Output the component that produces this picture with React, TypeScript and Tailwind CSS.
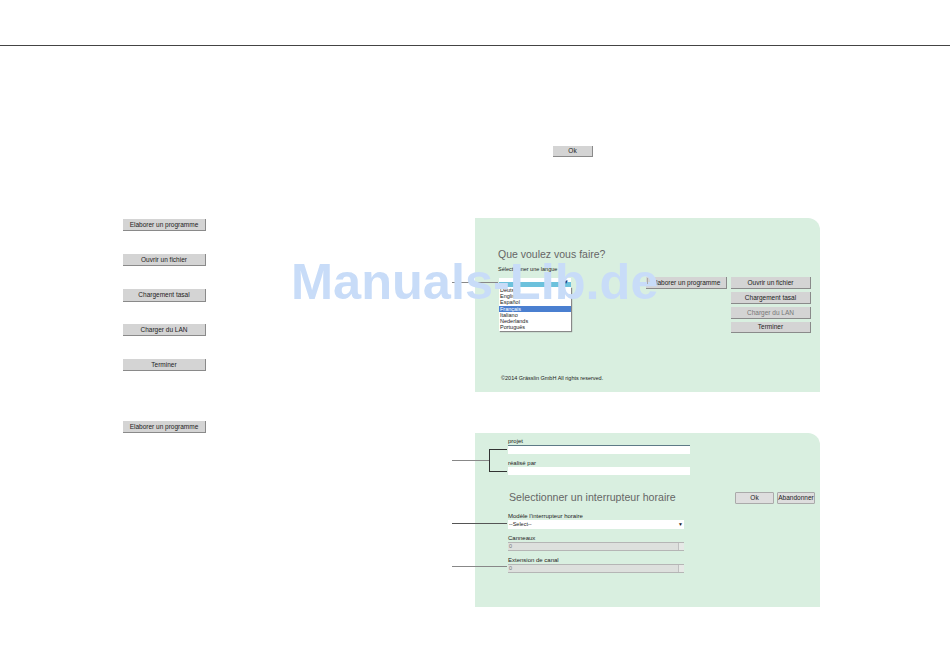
import React from 'react'

function GreyButton({ label, className = '' }: { label: string; className?: string }) {
  return (
    <div
      className={`flex items-center justify-center border-r border-b border-[#8a8a8a] bg-[#d4d4d4] pt-px text-[6.5px] leading-none text-[#222222] ${className}`}
    >
      {label}
    </div>
  )
}

function Spin({ value }: { value: string }) {
  return (
    <div className="flex h-[9px] w-[176px] items-center justify-between border-t border-b border-[#b5b5b5] bg-[#dde0dd] pl-px text-[5.5px] leading-none text-[#777777]">
      <span>{value}</span>
      <span className="h-full w-[6px] border-l border-[#c0c0c0] bg-[#e6e9e6]" />
    </div>
  )
}

const languages = ['Deutsch', 'English', 'Español', 'Français', 'Italiano', 'Nederlands', 'Português']

export default function App() {
  return (
    <div className="relative h-[670px] w-[950px] overflow-hidden bg-white font-['Liberation_Sans',sans-serif]">
      <header className="h-[46px] border-b border-[#444444]" />

      <main className="flex pl-[123px]">
        {/* colonne des boutons */}
        <div className="flex w-[83px] flex-col pt-[173px]">
          <GreyButton label="Elaborer un programme" className="h-[12px]" />
          <GreyButton label="Ouvrir un fichier" className="mt-[23px] h-[12px]" />
          <GreyButton label="Chargement tasal" className="mt-[23px] h-[13px]" />
          <GreyButton label="Charger du LAN" className="mt-[22px] h-[12px]" />
          <GreyButton label="Terminer" className="mt-[23px] h-[12px]" />
          <GreyButton label="Elaborer un programme" className="mt-[50px] h-[12px]" />
        </div>

        <div className="ml-[269px] flex w-[345px] flex-col pt-[100px]">
          <GreyButton label="Ok" className="ml-[78px] h-[11px] w-[40px]" />

          {/* écran de démarrage */}
          <section className="mt-[61px] flex h-[174px] flex-col rounded-tr-xl bg-[#d9efe0] pt-[29px] pl-[23px] text-[#222222]">
            <h2 className="text-[10.5px] leading-[14px] text-[#666666]">Que voulez vous faire?</h2>
            <p className="mt-[5px] text-[5.5px] leading-[7px]">Sélectionner une langue</p>
            <div className="mt-[5px] flex items-start">
              <div className="relative ml-px h-[9px] w-[72px] border-t-4 border-white bg-[#6cc1dc]">
                <span className="absolute top-[-3px] right-[2px] text-[6px] leading-none text-[#1e3a6e]">▼</span>
                <ul className="absolute top-[5px] left-0 z-10 w-[72px] bg-white pb-px text-[5.5px] leading-[6.2px] shadow-[1px_1px_1px_#888888]">
                  {languages.map((lang) => (
                    <li key={lang} className={lang === 'Français' ? 'bg-[#4a7fd0] pl-px text-white' : 'pl-px'}>
                      {lang}
                    </li>
                  ))}
                </ul>
              </div>
              <GreyButton label="Elaborer un programme" className="mt-[-1px] ml-[75px] h-[12px] w-[81px]" />
              <div className="mt-[-1px] ml-[4px] flex w-[80px] flex-col gap-[3px]">
                <GreyButton label="Ouvrir un fichier" className="h-[12px]" />
                <GreyButton label="Chargement tasal" className="h-[12px]" />
                <GreyButton label="Charger du LAN" className="h-[12px] text-[#777777]" />
                <GreyButton label="Terminer" className="h-[11px]" />
              </div>
            </div>
            <p className="mt-auto mb-[10px] ml-[3px] text-[5.5px] leading-[7px]">©2014 Grässlin GmbH All rights reserved.</p>
          </section>

          {/* sélection de l'interrupteur */}
          <section className="mt-[41px] flex h-[174px] rounded-tr-xl bg-[#d9efe0] pt-[4px] pl-[33px] text-[#222222]">
            <div className="flex w-[182px] flex-col text-[6px] leading-[8px]">
              <label>projet</label>
              <div className="h-[9px] border-t border-[#5d7a86] bg-white" />
              <label className="mt-[5px]">réalisé par</label>
              <div className="h-[8px] bg-white" />
              <h2 className="mt-[14px] ml-px text-[10.6px] leading-[16px] whitespace-nowrap text-[#666666]">
                Selectionner un interrupteur horaire
              </h2>
              <label className="mt-[7px]">Modèle l'interrupteur horaire</label>
              <div className="flex h-[9px] w-[176px] items-center justify-between bg-white px-px text-[5.5px] leading-none">
                <span>--Select--</span>
                <span className="text-[5px]">▼</span>
              </div>
              <label className="mt-[5px]">Canneaux</label>
              <Spin value="0" />
              <label className="mt-[5px]">Extension de canal</label>
              <Spin value="0" />
            </div>
            <div className="mt-[55px] ml-[45px] flex items-start gap-[3px]">
              <GreyButton label="Ok" className="h-[12px] w-[39px] rounded-[1px] border border-[#aaaaaa] bg-[#dedede]" />
              <GreyButton label="Abandonner" className="h-[12px] w-[38px] rounded-[1px] border border-[#aaaaaa] bg-[#dedede]" />
            </div>
          </section>
        </div>
      </main>

      {/* traits de repère */}
      <div className="absolute top-[282px] left-[452px] h-px w-[46px] bg-[#888888]" />
      <div className="absolute top-[460px] left-[452px] h-px w-[37px] bg-[#888888]" />
      <div className="absolute top-[449px] left-[489px] h-[23px] w-[18px] border-y border-l border-[#333333]" />
      <div className="absolute top-[523px] left-[452px] h-px w-[55px] bg-[#555555]" />
      <div className="absolute top-[566px] left-[452px] h-px w-[55px] bg-[#888888]" />

      {/* filigrane */}
      <div className="absolute top-[254px] left-[291px] z-20 text-[50.5px] leading-[56px] font-bold whitespace-nowrap text-[#c8dcf8]">
        Manuals-Lib.de
      </div>
      <div className="absolute top-[278px] left-[647px] z-30 h-[6px] w-px bg-[#aaaaaa]" />
    </div>
  )
}
